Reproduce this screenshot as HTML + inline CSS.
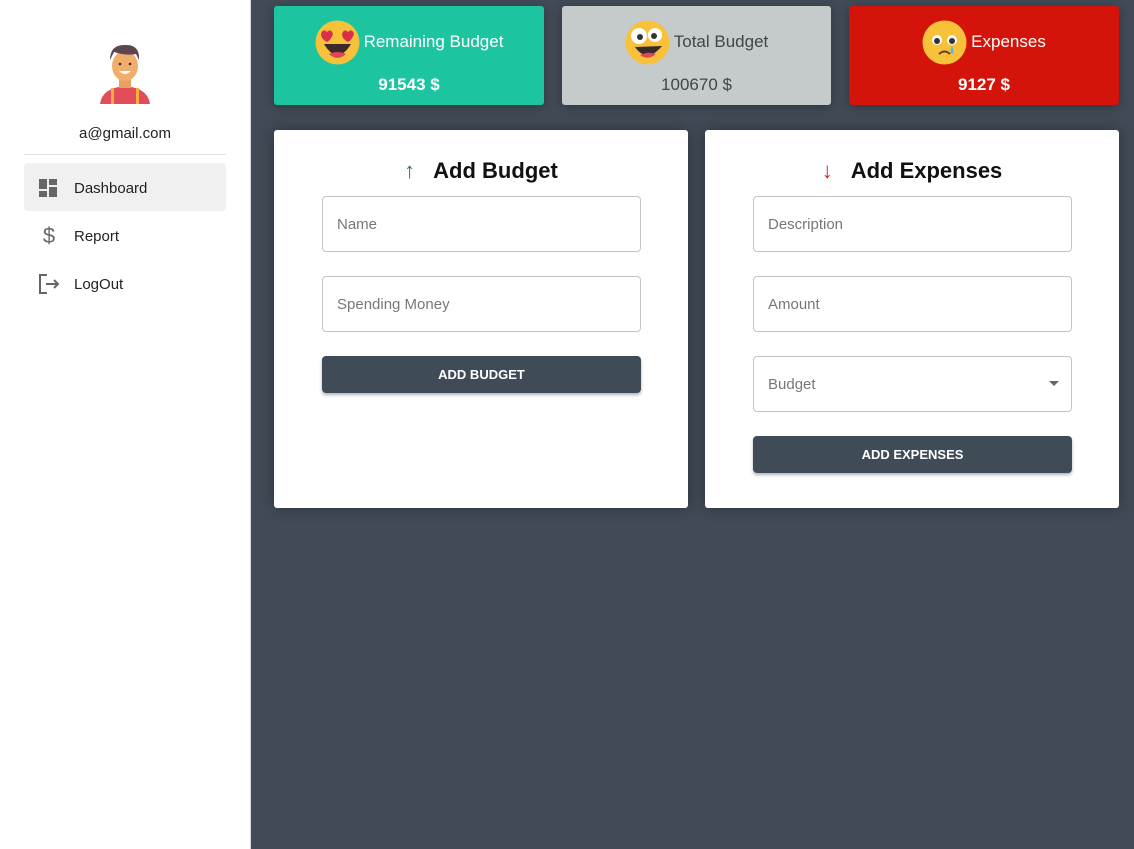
<!DOCTYPE html>
<html><head><meta charset="utf-8"><style>
*{box-sizing:border-box;margin:0;padding:0}
body{width:1134px;height:849px;background:#414b57;font-family:"Liberation Sans",sans-serif;position:relative;overflow:hidden}
.side{position:absolute;left:0;top:0;width:251px;height:849px;background:#fff;border-right:1px solid #d8d8d8}
.email{position:absolute;top:125px;left:0;width:250px;text-align:center;font-size:15px;color:#222}
.hr{position:absolute;left:24px;top:154px;width:202px;height:1px;background:#e0e0e0}
.nav{position:absolute;left:24px;width:202px;height:48px;border-radius:4px;display:flex;align-items:center;font-size:15px;color:#222;padding-top:2px}
.nav .ic{width:50px;display:flex;justify-content:center;color:#666}
.card{position:absolute;top:6px;height:99px;border-radius:3px;text-align:center;box-shadow:0 2px 10px rgba(0,0,0,.3)}
.card .t{display:flex;align-items:center;justify-content:center;margin-top:12px;height:46px;font-size:17px;padding-top:2px}
.card .v{font-size:17px;margin-top:11px;font-weight:bold}
.emo{width:45px;height:45px;margin-right:4px}
.box{position:absolute;top:130px;height:378px;background:#fff;border-radius:3px;box-shadow:0 0 14px rgba(0,0,0,.35)}
.box h2{position:absolute;top:28px;left:0;width:100%;text-align:center;font-size:22px;color:#111}
.inp{position:absolute;width:319px;height:56px;border:1px solid #c4c4c4;border-radius:4px;padding-left:14px;line-height:56px;color:#777;font-size:15px}
.btn{position:absolute;width:319px;height:37px;background:#404b58;border-radius:4px;color:#fff;font-weight:bold;font-size:13px;text-align:center;line-height:37px;box-shadow:0 2px 3px rgba(0,0,0,.3)}
</style></head><body>
<div class="side">
<svg style="position:absolute;left:98px;top:42px" width="54" height="64" viewBox="0 0 54 64">
<path d="M2 62 Q4 46 27 44 Q50 46 52 62 Z" fill="#e24d5a"/>
<rect x="13" y="46" width="3" height="16" fill="#f3b03e"/><rect x="38" y="46" width="3" height="16" fill="#f3b03e"/>
<rect x="21" y="36" width="12" height="10" fill="#e8a060"/>
<ellipse cx="27" cy="24" rx="13" ry="15" fill="#f0ad6c"/>
<path d="M12 18 Q12 2 28 3 Q42 3 41 18 L38 12 Q28 14 16 10 Z" fill="#5d4650"/>
<path d="M21 29 Q27 35 33 29 Z" fill="#fff"/>
<circle cx="22" cy="22" r="1.3" fill="#333"/><circle cx="32" cy="22" r="1.3" fill="#333"/>
</svg>
<div class="email">a@gmail.com</div>
<div class="hr"></div>
<div class="nav" style="top:163px;background:#f1f0f0"><div class="ic"><svg width="20" height="18"><rect x="0" y="0" width="8" height="10" fill="#666"/><rect x="10" y="0" width="8" height="6" fill="#666"/><rect x="0" y="12" width="8" height="6" fill="#666"/><rect x="10" y="8" width="8" height="10" fill="#666"/></svg></div>Dashboard</div>
<div class="nav" style="top:211px"><div class="ic" style="font-size:22px">$</div>Report</div>
<div class="nav" style="top:259px"><div class="ic"><svg width="22" height="20" fill="none" stroke="#666" stroke-width="2"><path d="M9 1H2V19H9M8 10H20M16 6L20 10L16 14"/></svg></div>LogOut</div>
</div>

<div class="card" style="left:274px;width:270px;background:#1dc4a0;color:#fff"><div class="t"><svg class="emo" viewBox="0 0 45 45"><circle cx="22.5" cy="22.5" r="22" fill="#f7c23a"/><path d="M9 24 Q22.5 46 36 24 Z" fill="#3b2a2a"/><path d="M14 34 Q22.5 42 31 34 Q22.5 30 14 34Z" fill="#e0465a"/><path d="M6 14 Q8 8 12 12 Q16 8 18 14 Q16 20 12 22 Q6 19 6 14Z" fill="#d8304a"/><path d="M27 14 Q29 8 33 12 Q37 8 39 14 Q37 20 33 22 Q27 19 27 14Z" fill="#d8304a"/></svg>Remaining Budget</div><div class="v">91543 $</div></div>
<div class="card" style="left:562px;width:269px;background:#c5cbcb;color:#444"><div class="t"><svg class="emo" viewBox="0 0 45 45"><circle cx="22.5" cy="22.5" r="22" fill="#f7c23a"/><circle cx="14" cy="16" r="8" fill="#fff"/><circle cx="30" cy="15" r="7" fill="#fff"/><circle cx="15" cy="17" r="3" fill="#333"/><circle cx="29" cy="16" r="3" fill="#333"/><path d="M10 27 Q22 44 37 26 Z" fill="#3b2a2a"/><path d="M15 35 Q23 41 31 34 Q23 31 15 35Z" fill="#e0465a"/></svg>Total Budget</div><div class="v" style="font-weight:normal">100670 $</div></div>
<div class="card" style="left:849px;width:270px;background:#d4140a;color:#fff"><div class="t"><svg class="emo" viewBox="0 0 45 45"><circle cx="22.5" cy="22.5" r="22" fill="#f7c23a"/><circle cx="15" cy="20" r="5" fill="#fff"/><circle cx="30" cy="20" r="5" fill="#fff"/><circle cx="15" cy="21" r="3" fill="#333"/><circle cx="30" cy="21" r="3" fill="#333"/><path d="M17 34 Q22.5 29 28 34" stroke="#6b3b2a" stroke-width="2" fill="none"/><path d="M30 26 Q27 32 30 34 Q33 32 30 26Z" fill="#5ab4e6"/></svg>Expenses</div><div class="v">9127 $</div></div>

<div class="box" style="left:274px;width:414px">
<h2><span style="color:#2e7d32;font-weight:bold;margin-right:18px">↑</span>Add Budget</h2>
<div class="inp" style="left:48px;top:66px">Name</div>
<div class="inp" style="left:48px;top:146px">Spending Money</div>
<div class="btn" style="left:48px;top:226px">ADD BUDGET</div>
</div>
<div class="box" style="left:705px;width:414px">
<h2><span style="color:#c62828;font-weight:bold;margin-right:18px">↓</span>Add Expenses</h2>
<div class="inp" style="left:48px;top:66px">Description</div>
<div class="inp" style="left:48px;top:146px">Amount</div>
<div class="inp" style="left:48px;top:226px">Budget<span style="position:absolute;right:12px;top:24px;width:0;height:0;border-left:5px solid transparent;border-right:5px solid transparent;border-top:5px solid #666"></span></div>
<div class="btn" style="left:48px;top:306px">ADD EXPENSES</div>
</div>
</body></html>
